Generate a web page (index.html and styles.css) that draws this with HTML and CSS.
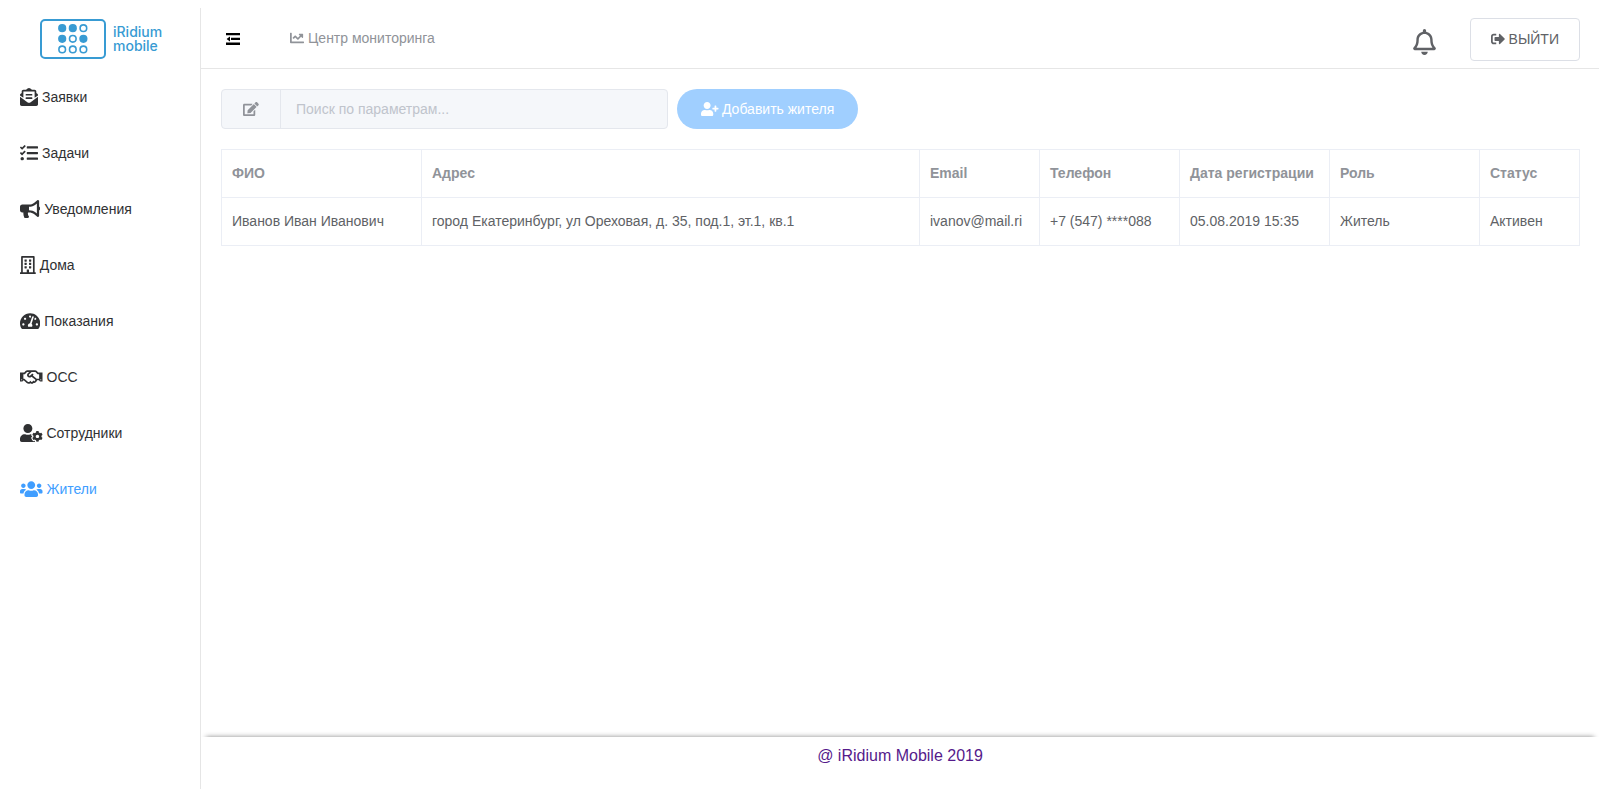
FILE: index.html
```html
<!DOCTYPE html>
<html lang="ru">
<head>
<meta charset="utf-8">
<title>Жители</title>
<link rel="stylesheet" href="styles.css">
</head>
<body class="page">
<aside class="sidebar">
  <a class="logo" href="#">
    <svg class="logo-mark" viewBox="0 0 66 40" fill="none" stroke="#389bd3" stroke-width="1.6">
      <rect x="1" y="1" width="64" height="38" rx="4" stroke-width="2"/>
      <g fill="#389bd3"><circle cx="22.2" cy="9.2" r="3.3"/><circle cx="32.8" cy="9.2" r="3.3"/><circle cx="22.2" cy="19.8" r="3.3"/><circle cx="43.4" cy="19.8" r="3.3"/></g>
      <circle cx="43.4" cy="9.2" r="3.3"/><circle cx="32.8" cy="19.8" r="3.3"/><circle cx="22.2" cy="30.4" r="3.3"/><circle cx="32.8" cy="30.4" r="3.3"/><circle cx="43.4" cy="30.4" r="3.3"/>
    </svg>
    <span class="logo-text">iRidium<br>mobile</span>
  </a>
  <nav class="menu">
    <a class="menu-item" href="#"><svg class="icon" viewBox="0 0 512 512"><path d="M176 216h160c8.84 0 16-7.16 16-16v-16c0-8.84-7.16-16-16-16H176c-8.84 0-16 7.16-16 16v16c0 8.84 7.16 16 16 16zm-16 80c0 8.84 7.16 16 16 16h160c8.84 0 16-7.16 16-16v-16c0-8.84-7.16-16-16-16H176c-8.84 0-16 7.16-16 16v16zm96 121.13c-16.42 0-32.84-5.06-46.86-15.19L0 250.86V464c0 26.51 21.49 48 48 48h416c26.51 0 48-21.49 48-48V250.86L302.86 401.94c-14.02 10.12-30.44 15.19-46.86 15.19zm237.61-254.18c-8.85-6.94-17.24-13.47-29.61-22.81V96c0-26.51-21.49-48-48-48h-77.55c-3.04-2.2-5.87-4.26-9.04-6.56C312.6 29.17 279.2-.35 256 0c-23.2-.35-56.59 29.17-73.41 41.44-3.17 2.3-6 4.36-9.04 6.56H96c-26.51 0-48 21.49-48 48v44.14c-12.37 9.33-20.76 15.87-29.61 22.81A47.995 47.995 0 0 0 0 200.72v10.65l96 69.35V96h320v184.72l96-69.35v-10.65c0-14.74-6.78-28.67-18.39-37.77z"/></svg>Заявки</a>
    <a class="menu-item" href="#"><svg class="icon" viewBox="0 0 512 512"><path d="M139.61 35.5a12 12 0 0 0-17 0L58.93 98.81l-22.7-22.12a12 12 0 0 0-17 0L3.53 92.41a12 12 0 0 0 0 17l47.59 47.4a12.78 12.78 0 0 0 17.61 0l15.59-15.62L156.52 69a12.09 12.09 0 0 0 .09-17zm0 159.19a12 12 0 0 0-17 0l-63.68 63.72-22.7-22.1a12 12 0 0 0-17 0L3.53 252a12 12 0 0 0 0 17L51 316.5a12.77 12.77 0 0 0 17.6 0l15.7-15.69 72.2-72.22a12 12 0 0 0 .09-16.9zM64 368c-26.49 0-48.59 21.5-48.59 48S37.53 464 64 464a48 48 0 0 0 0-96zm432 16H208a16 16 0 0 0-16 16v32a16 16 0 0 0 16 16h288a16 16 0 0 0 16-16v-32a16 16 0 0 0-16-16zm0-320H208a16 16 0 0 0-16 16v32a16 16 0 0 0 16 16h288a16 16 0 0 0 16-16V80a16 16 0 0 0-16-16zm0 160H208a16 16 0 0 0-16 16v32a16 16 0 0 0 16 16h288a16 16 0 0 0 16-16v-32a16 16 0 0 0-16-16z"/></svg>Задачи</a>
    <a class="menu-item" href="#"><svg class="icon" viewBox="0 0 576 512"><path d="M576 240c0-23.63-12.95-44.04-32-55.12V32.01C544 23.26 537.02 0 512 0c-7.12 0-14.19 2.38-19.98 7.02l-85.03 68.03C364.28 109.19 310.66 128 256 128H64c-35.35 0-64 28.65-64 64v96c0 35.35 28.65 64 64 64h33.7c-1.39 10.48-2.18 21.14-2.18 32 0 39.77 9.26 77.35 25.56 110.94 5.19 10.69 16.52 17.06 28.4 17.06h74.28c26.05 0 41.69-29.84 25.9-50.56-16.4-21.52-26.15-48.36-26.15-77.44 0-11.11 1.62-21.79 4.41-32H256c54.66 0 108.28 18.81 150.98 52.95l85.03 68.03a32.023 32.023 0 0 0 19.98 7.02c24.92 0 32-22.78 32-32V295.13C563.05 284.04 576 263.63 576 240zm-96 141.42l-33.05-26.44C392.95 311.78 325.12 288 256 288v-96c69.12 0 136.95-23.78 190.95-66.98L480 98.58v282.84z"/></svg>Уведомления</a>
    <a class="menu-item" href="#"><svg class="icon" viewBox="0 0 448 512"><path d="M128 148v-40c0-6.6 5.4-12 12-12h40c6.6 0 12 5.4 12 12v40c0 6.6-5.4 12-12 12h-40c-6.6 0-12-5.4-12-12zm140 12h40c6.6 0 12-5.4 12-12v-40c0-6.6-5.4-12-12-12h-40c-6.6 0-12 5.4-12 12v40c0 6.6 5.4 12 12 12zm-128 96h40c6.6 0 12-5.4 12-12v-40c0-6.6-5.4-12-12-12h-40c-6.6 0-12 5.4-12 12v40c0 6.6 5.4 12 12 12zm128 0h40c6.6 0 12-5.4 12-12v-40c0-6.6-5.4-12-12-12h-40c-6.6 0-12 5.4-12 12v40c0 6.6 5.4 12 12 12zm-76 84v-40c0-6.6-5.4-12-12-12h-40c-6.6 0-12 5.4-12 12v40c0 6.6 5.4 12 12 12h40c6.6 0 12-5.4 12-12zm76 12h40c6.6 0 12-5.4 12-12v-40c0-6.6-5.4-12-12-12h-40c-6.6 0-12 5.4-12 12v40c0 6.6 5.4 12 12 12zm180 124v36H0v-36c0-6.6 5.4-12 12-12h19.5V24c0-13.3 10.7-24 24-24h337c13.3 0 24 10.7 24 24v440H436c6.6 0 12 5.4 12 12zM79.5 463H192v-67c0-6.6 5.4-12 12-12h40c6.6 0 12 5.4 12 12v67h112.5V49L80 48l-.5 415z"/></svg>Дома</a>
    <a class="menu-item" href="#"><svg class="icon" viewBox="0 0 576 512"><path d="M288 32C128.94 32 0 160.94 0 320c0 52.8 14.25 102.26 39.06 144.8 5.61 9.62 16.3 15.2 27.44 15.2h443c11.14 0 21.83-5.58 27.44-15.2C561.75 422.26 576 372.8 576 320c0-159.06-128.94-288-288-288zm0 64c14.71 0 26.58 10.13 30.32 23.65-1.11 2.26-2.64 4.23-3.45 6.67l-9.22 27.67c-5.13 3.49-10.97 6.01-17.64 6.01-17.67 0-32-14.33-32-32S270.33 96 288 96zM96 384c-17.67 0-32-14.33-32-32s14.33-32 32-32 32 14.33 32 32-14.33 32-32 32zm48-160c-17.67 0-32-14.33-32-32s14.33-32 32-32 32 14.33 32 32-14.33 32-32 32zm246.77-72.41l-61.33 184C343.13 347.33 352 364.54 352 384c0 11.72-3.38 22.55-8.88 32H232.88c-5.5-9.45-8.88-20.28-8.88-32 0-33.94 26.5-61.43 59.9-63.59l61.34-184.01c4.17-12.56 17.73-19.45 30.36-15.17 12.57 4.19 19.35 17.79 15.17 30.36zm14.66 57.2l15.52-46.55c3.47-1.29 7.13-2.23 11.05-2.23 17.67 0 32 14.33 32 32s-14.33 32-32 32c-11.38-.01-20.89-6.28-26.57-15.22zM480 384c-17.67 0-32-14.33-32-32s14.33-32 32-32 32 14.33 32 32-14.33 32-32 32z"/></svg>Показания</a>
    <a class="menu-item" href="#"><svg class="icon" viewBox="0 0 640 512"><path d="M519.2 127.9l-47.6-47.6A56.252 56.252 0 0 0 432 64H205.2c-14.8 0-29.1 5.9-39.6 16.3L118 127.9H0v255.7h64c17.6 0 31.8-14.2 31.9-31.7h9.1l84.6 76.4c30.9 25.1 73.8 25.7 105.6 3.8 12.5 10.8 26 15.9 41.1 15.9 18.2 0 35.3-7.4 48.8-24 22.1 8.7 48.2 2.6 64-16.8l26.2-32.3c5.6-6.9 9.1-14.8 10.9-23h57.9c.1 17.5 14.4 31.7 31.9 31.7h64V127.9H519.2zM48 351.6c-8.8 0-16-7.2-16-16s7.2-16 16-16 16 7.2 16 16c0 8.9-7.2 16-16 16zm390-6.9l-26.1 32.2c-2.8 3.4-7.8 4-11.3 1.2l-23.9-19.4-30 36.5c-6 7.3-15 4.8-18 2.4l-36.8-31.5-15.6 19.2c-13.9 17.1-39.2 19.7-55.3 6.6l-97.3-88H96V175.8h41.9l61.7-61.6c2-.8 3.7-1.5 5.7-2.3H262l-38.7 35.5c-29.4 26.9-31.1 72.3-4.4 101.3 14.8 16.2 61.2 41.2 101.5 4.4l8.2-7.5 108.2 87.8c3.4 2.8 3.9 7.9 1.2 11.3zm106-40.8h-69.2c-2.3-2.8-4.9-5.4-7.7-7.7l-102.7-83.4 12.5-11.4c6.5-6 7-16.1 1-22.6L367 167.1c-6-6.5-16.1-6.9-22.6-1l-55.2 50.6c-9.5 8.7-25.7 9.4-34.6 0-9.3-9.9-8.5-25.1 1.2-33.9l65.6-60.1c7.4-6.8 17-10.5 27-10.5l83.7-.2c2.1 0 4.1.8 5.5 2.3l61.7 61.6H544v128zm48 47.7c-8.8 0-16-7.2-16-16s7.2-16 16-16 16 7.2 16 16c0 8.9-7.2 16-16 16z"/></svg>ОСС</a>
    <a class="menu-item" href="#"><svg class="icon" viewBox="0 0 640 512"><path d="M610.5 373.3c2.6-14.1 2.6-28.5 0-42.6l25.8-14.9c3-1.7 4.3-5.2 3.3-8.5-6.7-21.6-18.2-41.2-33.2-57.4-2.3-2.5-6-3.1-9-1.4l-25.8 14.9c-10.9-9.3-23.4-16.5-36.9-21.3v-29.8c0-3.4-2.4-6.4-5.7-7.1-22.3-5-45-4.8-66.2 0-3.3.7-5.7 3.7-5.7 7.1v29.8c-13.5 4.8-26 12-36.9 21.3l-25.8-14.9c-2.9-1.7-6.7-1.1-9 1.4-15 16.2-26.5 35.8-33.2 57.4-1 3.3.4 6.8 3.3 8.5l25.8 14.9c-2.6 14.1-2.6 28.5 0 42.6l-25.8 14.9c-3 1.7-4.3 5.2-3.3 8.5 6.7 21.6 18.2 41.1 33.2 57.4 2.3 2.5 6 3.1 9 1.4l25.8-14.9c10.9 9.3 23.4 16.5 36.9 21.3v29.8c0 3.4 2.4 6.4 5.7 7.1 22.3 5 45 4.8 66.2 0 3.3-.7 5.7-3.7 5.7-7.1v-29.8c13.5-4.8 26-12 36.9-21.3l25.8 14.9c2.9 1.7 6.7 1.1 9-1.4 15-16.2 26.5-35.8 33.2-57.4 1-3.3-.4-6.8-3.3-8.5l-25.8-14.9zM496 400.5c-26.8 0-48.5-21.8-48.5-48.5s21.8-48.5 48.5-48.5 48.5 21.8 48.5 48.5-21.7 48.5-48.5 48.5zM224 256c70.7 0 128-57.3 128-128S294.7 0 224 0 96 57.3 96 128s57.3 128 128 128zm201.2 226.5c-2.3-1.2-4.6-2.6-6.8-3.9l-7.9 4.6c-6 3.4-12.8 5.3-19.6 5.3-10.9 0-21.4-4.6-28.9-12.6-18.3-19.8-32.3-43.9-40.2-69.6-5.5-17.7 1.9-36.4 17.9-45.7l7.9-4.6c-.1-2.6-.1-5.2 0-7.8l-7.9-4.6c-16-9.2-23.4-28-17.9-45.7.9-2.9 2.2-5.8 3.2-8.7-3.8-.3-7.5-1.2-11.4-1.2h-16.7c-22.2 10.2-46.9 16-72.9 16s-50.6-5.8-72.9-16h-16.7C60.2 288 0 348.2 0 422.4V464c0 26.5 21.5 48 48 48h352c10.1 0 19.5-3.2 27.2-8.5-1.2-3.8-2-7.7-2-11.8v-9.2z"/></svg>Сотрудники</a>
    <a class="menu-item menu-item-active" href="#" aria-current="page"><svg class="icon" viewBox="0 0 640 512"><path d="M96 224c35.3 0 64-28.7 64-64s-28.7-64-64-64-64 28.7-64 64 28.7 64 64 64zm448 0c35.3 0 64-28.7 64-64s-28.7-64-64-64-64 28.7-64 64 28.7 64 64 64zm32 32h-64c-17.6 0-33.5 7.1-45.1 18.6 40.3 22.1 68.9 62 75.1 109.4h66c17.7 0 32-14.3 32-32v-32c0-35.3-28.7-64-64-64zm-256 0c61.9 0 112-50.1 112-112S381.9 32 320 32 208 82.1 208 144s50.1 112 112 112zm76.8 32h-8.3c-20.8 10-43.9 16-68.5 16s-47.6-6-68.5-16h-8.3C179.6 288 128 339.6 128 403.2V432c0 26.5 21.5 48 48 48h288c26.5 0 48-21.5 48-48v-28.8c0-63.6-51.6-115.2-115.2-115.2zm-223.7-13.4C161.5 263.1 145.6 256 128 256H64c-35.3 0-64 28.7-64 64v32c0 17.7 14.3 32 32 32h65.9c6.3-47.4 34.9-87.3 75.2-109.4z"/></svg>Жители</a>
  </nav>
</aside>
<div class="content">
  <header class="header">
    <button class="toggle" type="button" aria-label="Свернуть меню"><svg class="toggle-icon" viewBox="0 0 14 12"><path d="M0 0h14v2.3H0zM5 4.8h9v2.3H5zM0 9.6h14v2.3H0zM4 3.4v5L0.6 6z"/></svg></button>
    <a class="header-link" href="#"><svg class="icon icon-small" viewBox="0 0 512 512"><path d="M496 384H64V80c0-8.84-7.16-16-16-16H16C7.16 64 0 71.16 0 80v336c0 17.67 14.33 32 32 32h464c8.84 0 16-7.16 16-16v-32c0-8.84-7.16-16-16-16zM464 96H345.94c-21.38 0-32.09 25.85-16.97 40.97l32.4 32.4L288 242.75l-73.37-73.37c-12.5-12.5-32.76-12.5-45.25 0l-68.69 68.69c-6.25 6.25-6.25 16.38 0 22.63l22.62 22.62c6.25 6.25 16.38 6.25 22.63 0L192 237.25l73.37 73.37c12.5 12.5 32.76 12.5 45.25 0l96-96 32.4 32.4c15.12 15.12 40.97 4.41 40.97-16.97V112c.01-8.84-7.15-16-15.99-16z"/></svg>Центр мониторинга</a>
    <div class="header-actions">
      <button class="bell" type="button" aria-label="Уведомления"><svg class="bell-icon" viewBox="0 0 448 512"><path d="M439.39 362.29c-19.32-20.76-55.47-51.99-55.47-154.29 0-77.7-54.48-139.9-127.94-155.16V32c0-17.67-14.32-32-31.98-32s-31.98 14.33-31.98 32v20.84C118.56 68.1 64.08 130.3 64.08 208c0 102.3-36.15 133.53-55.47 154.29-6 6.45-8.66 14.16-8.61 21.71.11 16.4 12.98 32 32.1 32h383.8c19.12 0 32-15.6 32.1-32 .05-7.55-2.61-15.27-8.61-21.71zM67.53 368c21.22-27.97 44.42-74.33 44.53-159.42 0-.2-.06-.38-.06-.58 0-61.86 50.14-112 112-112s112 50.14 112 112c0 .2-.06.38-.06.58.11 85.1 23.31 131.46 44.53 159.42H67.53zM224 512c35.32 0 63.97-28.65 63.97-64H160.03c0 35.35 28.65 64 63.97 64z"/></svg></button>
      <button class="logout" type="button"><svg class="icon icon-small" viewBox="0 0 512 512"><path d="M497 273L329 441c-15 15-41 4.5-41-17v-96H152c-13.3 0-24-10.7-24-24v-96c0-13.3 10.7-24 24-24h136V88c0-21.4 25.9-32 41-17l168 168c9.3 9.4 9.3 24.6 0 34zM192 436v-40c0-6.6-5.4-12-12-12H96c-17.7 0-32-14.3-32-32V160c0-17.7 14.3-32 32-32h84c6.6 0 12-5.4 12-12V76c0-6.6-5.4-12-12-12H96c-53 0-96 43-96 96v192c0 53 43 96 96 96h84c6.6 0 12-5.4 12-12z"/></svg>ВЫЙТИ</button>
    </div>
  </header>
  <main class="main">
    <div class="toolbar">
      <div class="search">
        <button class="search-edit" type="button" aria-label="Параметры поиска" disabled><svg class="icon icon-small" viewBox="0 0 576 512"><path d="M402.6 83.2l90.2 90.2c3.8 3.8 3.8 10 0 13.8L274.4 405.6l-92.8 10.3c-12.4 1.4-22.9-9.1-21.5-21.5l10.3-92.8L388.8 83.2c3.8-3.8 10-3.8 13.8 0zm162-22.9l-48.8-48.8c-15.2-15.2-39.9-15.2-55.2 0l-35.4 35.4c-3.8 3.8-3.8 10 0 13.8l90.2 90.2c3.8 3.8 10 3.8 13.8 0l35.4-35.4c15.2-15.3 15.2-40 0-55.2zM384 346.2V448H64V128h229.8c3.2 0 6.2-1.3 8.5-3.5l40-40c7.6-7.6 2.2-20.5-8.5-20.5H48C21.5 64 0 85.5 0 112v352c0 26.5 21.5 48 48 48h352c26.5 0 48-21.5 48-48V306.2c0-10.7-12.9-16-20.5-8.5l-40 40c-2.2 2.3-3.5 5.3-3.5 8.5z"/></svg></button>
        <input class="search-input" type="text" aria-label="Поиск по параметрам" placeholder="Поиск по параметрам..." disabled>
      </div>
      <button class="add" type="button" disabled><svg class="icon icon-small" viewBox="0 0 640 512"><path d="M624 208h-64v-64c0-8.8-7.2-16-16-16h-32c-8.8 0-16 7.2-16 16v64h-64c-8.8 0-16 7.2-16 16v32c0 8.8 7.2 16 16 16h64v64c0 8.8 7.2 16 16 16h32c8.8 0 16-7.2 16-16v-64h64c8.8 0 16-7.2 16-16v-32c0-8.8-7.2-16-16-16zm-400 48c70.7 0 128-57.3 128-128S294.7 0 224 0 96 57.3 96 128s57.3 128 128 128zm89.6 32h-16.7c-22.2 10.2-46.9 16-72.9 16s-50.6-5.8-72.9-16h-16.7C60.2 288 0 348.2 0 422.4V464c0 26.5 21.5 48 48 48h352c26.5 0 48-21.5 48-48v-41.6c0-74.2-60.2-134.4-134.4-134.4z"/></svg>Добавить жителя</button>
    </div>
    <table class="table">
      <colgroup><col class="col-name"><col><col class="col-email"><col class="col-phone"><col class="col-date"><col class="col-role"><col class="col-status"></colgroup>
      <thead>
        <tr><th>ФИО</th><th>Адрес</th><th>Email</th><th>Телефон</th><th>Дата регистрации</th><th>Роль</th><th>Статус</th></tr>
      </thead>
      <tbody>
        <tr><td>Иванов Иван Иванович</td><td>город Екатеринбург, ул Ореховая, д. 35, под.1, эт.1, кв.1</td><td>ivanov@mail.ri</td><td>+7 (547) ****088</td><td>05.08.2019 15:35</td><td>Житель</td><td>Активен</td></tr>
      </tbody>
    </table>
  </main>
  <footer class="footer"><a class="footer-link" href="#">@ iRidium Mobile 2019</a></footer>
</div>
</body>
</html>
```

FILE: styles.css
```css
* {
  box-sizing: border-box;
}

.page {
  display: flex;
  min-height: calc(100vh - 8px);
  margin: 8px 0 0;
  background: #fff;
  color: #606266;
  font-family: "Liberation Sans", Arial, sans-serif;
  font-size: 14px;
}

button,
input {
  margin: 0;
  font: inherit;
}

.icon {
  flex: none;
  height: 18px;
  fill: currentColor;
}

.icon-small {
  height: 14px;
}

.sidebar {
  flex: none;
  width: 201px;
  border-right: 1px solid #e6e6e6;
}

.logo {
  display: flex;
  align-items: center;
  gap: 7px;
  height: 61px;
  padding-left: 40px;
  color: #389bd3;
  text-decoration: none;
}

.logo-mark {
  width: 66px;
  height: 40px;
}

.logo-text {
  font-family: Inter, sans-serif;
  font-size: 14px;
  font-weight: 500;
  line-height: 14px;
}

.menu-item {
  display: flex;
  align-items: center;
  gap: 4px;
  height: 56px;
  padding: 0 20px;
  color: #303133;
  text-decoration: none;
}

.menu-item-active {
  color: #409eff;
}

.content {
  display: flex;
  flex: 1;
  flex-direction: column;
  min-width: 0;
}

.header {
  display: flex;
  align-items: center;
  height: 61px;
  padding: 0 19px 0 25px;
  border-bottom: 1px solid #e6e6e6;
}

.toggle,
.bell {
  display: flex;
  padding: 0;
  border: 0;
  background: none;
  color: inherit;
}

.toggle {
  padding-top: 2px;
}

.toggle-icon {
  width: 14px;
  height: 12px;
  fill: #000;
}

.header-link {
  display: flex;
  align-items: center;
  gap: 4px;
  margin-left: 50px;
  color: #909399;
  text-decoration: none;
}

.header-actions {
  display: flex;
  align-items: center;
  gap: 34px;
  margin-left: auto;
  padding-top: 2px;
}

.bell {
  padding-top: 5px;
}

.bell-icon {
  width: 23px;
  height: 26px;
  fill: currentColor;
}

.logout {
  display: flex;
  align-items: center;
  gap: 4px;
  height: 43px;
  padding: 0 20px;
  border: 1px solid #dcdfe6;
  border-radius: 4px;
  background: #fff;
  color: #606266;
}

.main {
  flex: 1;
  padding: 20px 19px 20px 20px;
}

.toolbar {
  display: flex;
  gap: 9px;
  margin-bottom: 20px;
}

.search {
  display: flex;
  width: calc(33% - 1px);
  height: 40px;
  border: 1px solid #e4e7ed;
  border-radius: 4px;
  background: #f5f7fa;
}

.search-edit {
  display: flex;
  align-items: center;
  justify-content: center;
  width: 59px;
  padding: 0;
  border: 0;
  border-right: 1px solid #e4e7ed;
  background: none;
  color: #909399;
}

.search-input {
  flex: 1;
  min-width: 0;
  padding: 0 15px;
  border: 0;
  background: none;
}

.search-input::placeholder {
  color: #c0c4cc;
}

.add {
  display: flex;
  align-items: center;
  gap: 3px;
  height: 40px;
  padding: 0 24px;
  border: 0;
  border-radius: 20px;
  background: #a0cfff;
  color: #fff;
}

.table {
  width: 100%;
  border-collapse: collapse;
  table-layout: fixed;
}

.table th,
.table td {
  height: 48px;
  padding: 0 10px 2px;
  border: 1px solid #ebeef5;
  text-align: left;
  white-space: nowrap;
}

.table th {
  color: #909399;
}

.col-name {
  width: 200px;
}

.col-email {
  width: 120px;
}

.col-phone {
  width: 140px;
}

.col-date,
.col-role {
  width: 150px;
}

.col-status {
  width: 100px;
}

.footer {
  min-height: 52px;
  padding-top: 10px;
  box-shadow: 0 -5px 5px -5px #888;
  font-size: 16px;
  line-height: 18px;
  text-align: center;
}

.footer-link {
  color: #551a8b;
  text-decoration: none;
}
```
